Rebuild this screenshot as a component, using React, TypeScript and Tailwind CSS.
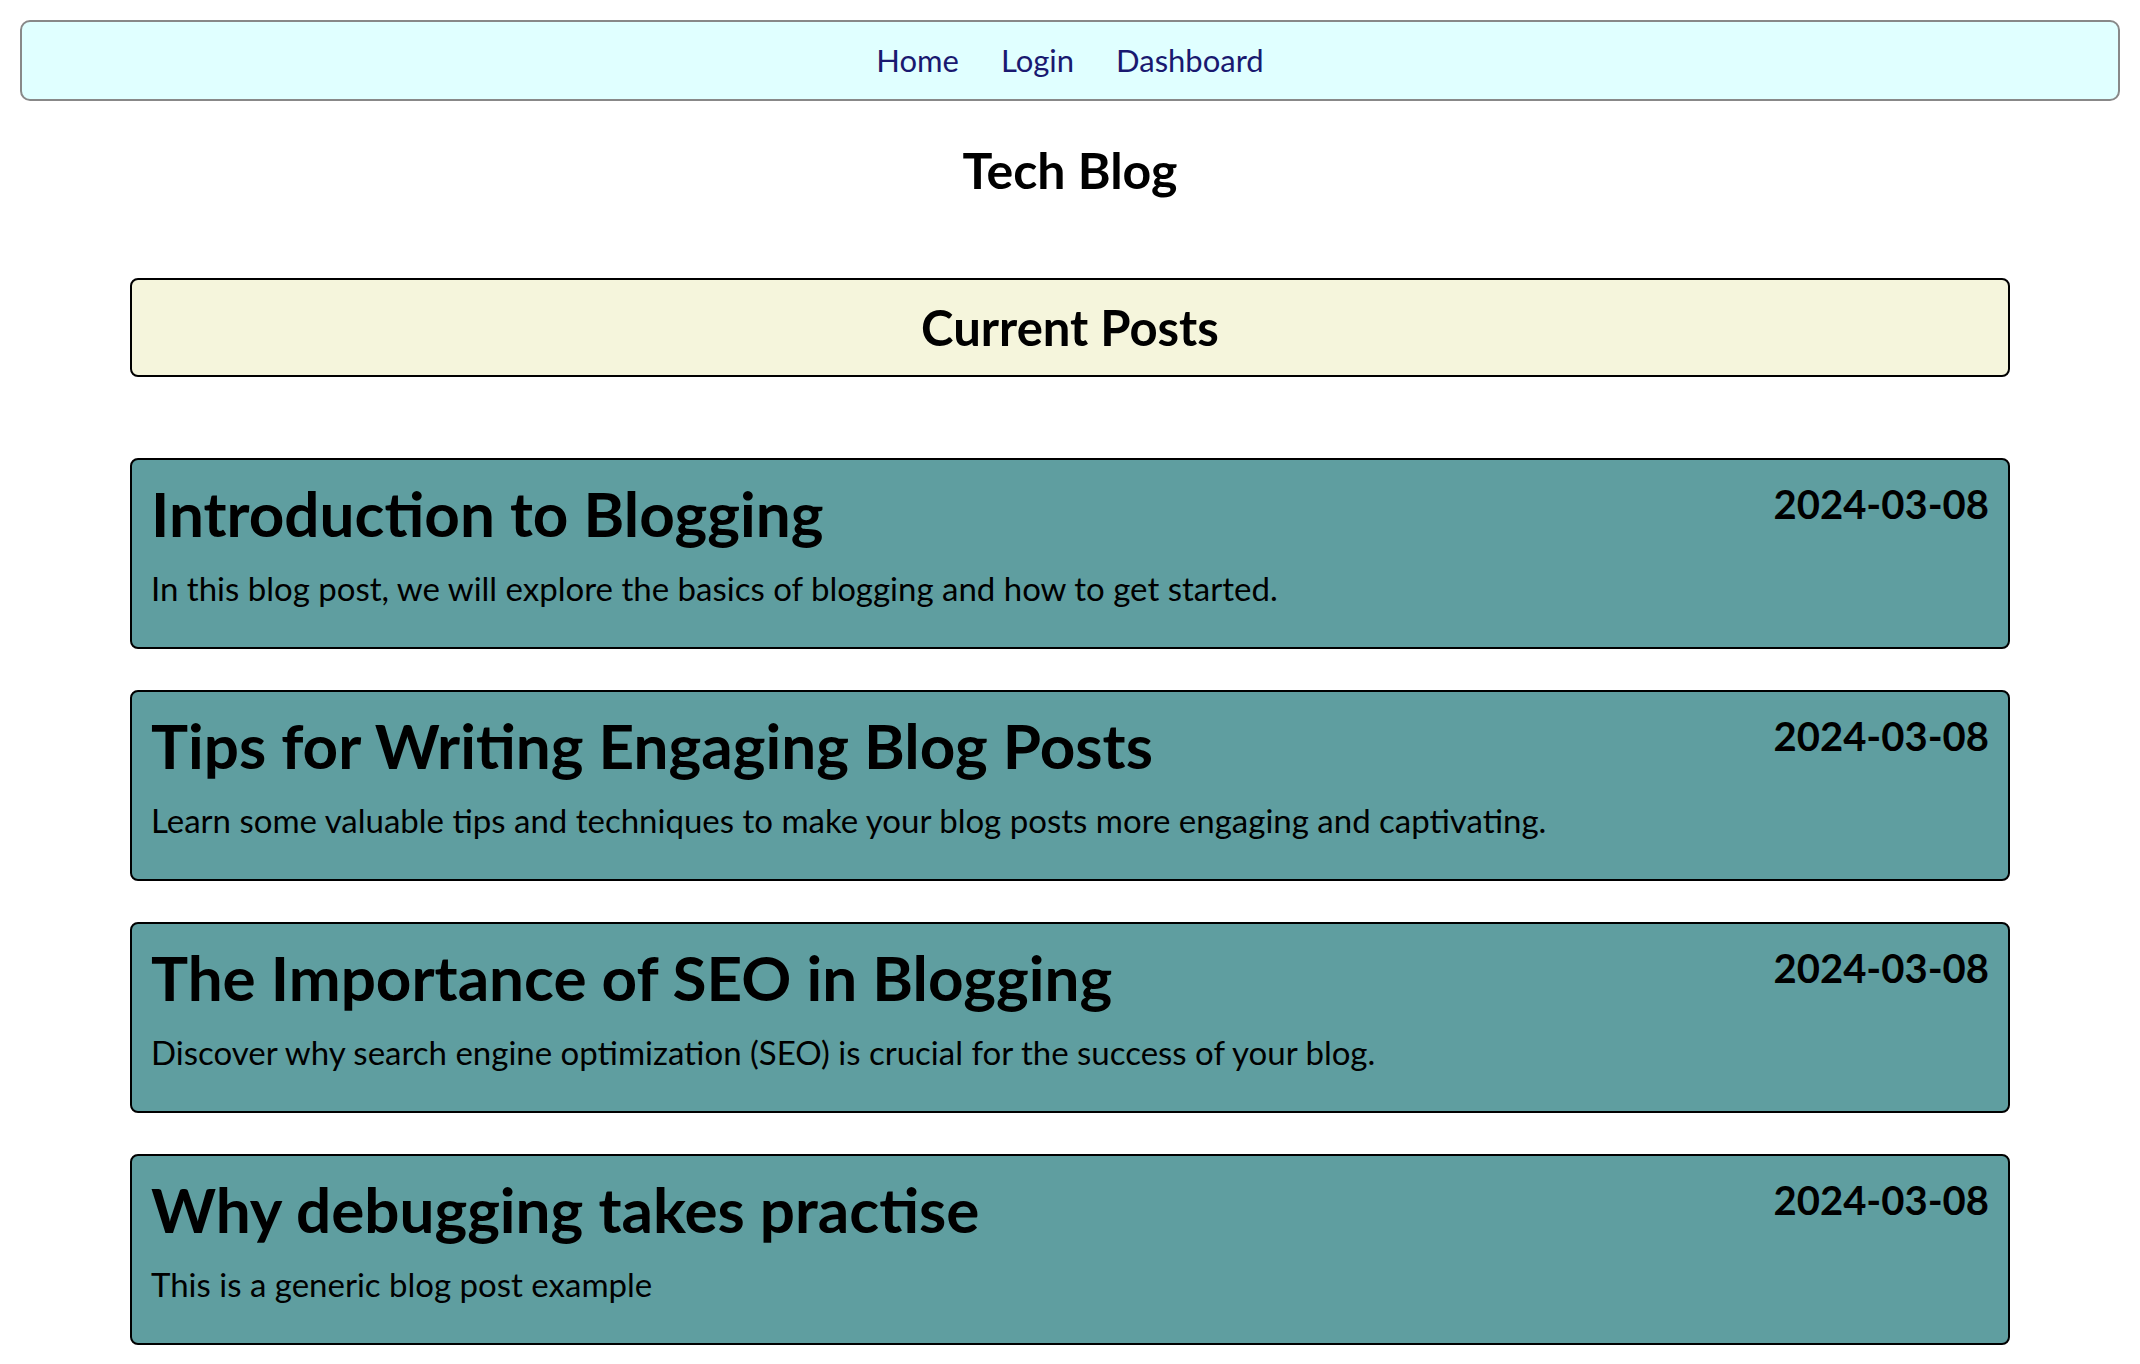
import React from "react";

type Post = {
  id: number;
  title: string;
  body: string;
  date: string;
};

const posts: Post[] = [
  {
    id: 1,
    title: "Introduction to Blogging",
    body: "In this blog post, we will explore the basics of blogging and how to get started.",
    date: "2024-03-08",
  },
  {
    id: 2,
    title: "Tips for Writing Engaging Blog Posts",
    body: "Learn some valuable tips and techniques to make your blog posts more engaging and captivating.",
    date: "2024-03-08",
  },
  {
    id: 3,
    title: "The Importance of SEO in Blogging",
    body: "Discover why search engine optimization (SEO) is crucial for the success of your blog.",
    date: "2024-03-08",
  },
  {
    id: 4,
    title: "Why debugging takes practise",
    body: "This is a generic blog post example",
    date: "2024-03-08",
  },
];

const PostCard: React.FC<{ post: Post }> = ({ post }) => (
  <div className="h-[191px] border-2 border-black rounded-[8px] bg-[#5f9ea0] px-[19px] pt-[22px]">
    <div className="flex items-start justify-between">
      <h2 className="text-[62px] leading-none font-bold">{post.title}</h2>
      <span className="mt-[2px] text-[40px] leading-none font-bold">{post.date}</span>
    </div>
    <p className="mt-[28px] text-[33px] leading-none">{post.body}</p>
  </div>
);

export default function App() {
  return (
    <div className="min-h-screen bg-white pt-[20px] font-['Lato',sans-serif] text-black">
      <nav className="mx-[20px] h-[81px] border-2 border-[#888888] rounded-[10px] bg-[#e0ffff] flex items-center justify-center gap-[42px] text-[31px] text-[#191970]">
        <a href="#">Home</a>
        <a href="#">Login</a>
        <a href="#">Dashboard</a>
      </nav>

      <h1 className="mt-[44px] text-center text-[50px] leading-none font-bold">Tech Blog</h1>

      <div className="mx-[130px] mt-[83px]">
        <div className="h-[99px] border-2 border-black rounded-[8px] bg-[#f5f5dc] flex items-center justify-center">
          <h2 className="text-[49px] leading-none font-bold">Current Posts</h2>
        </div>

        <div className="mt-[81px] flex flex-col gap-[41px] pb-[19px]">
          {posts.map((post) => (
            <PostCard key={post.id} post={post} />
          ))}
        </div>
      </div>
    </div>
  );
}
